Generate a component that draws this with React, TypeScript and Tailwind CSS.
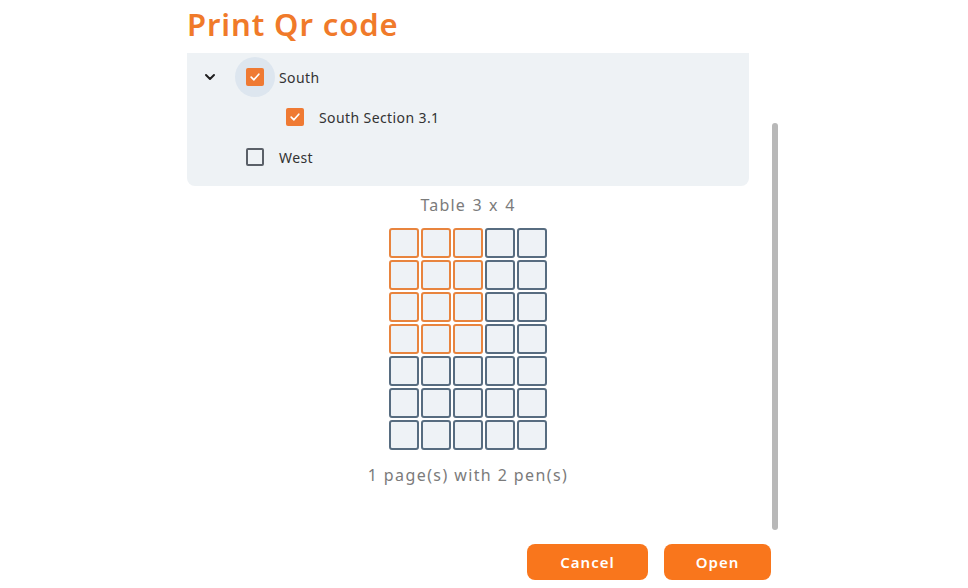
import React from "react";

function Check({ checked }: { checked: boolean }) {
  if (checked) {
    return (
      <div className="w-[18px] h-[18px] rounded-[2px] bg-[#ef7a33] flex items-center justify-center">
        <svg width="12" height="12" viewBox="0 0 12 12" fill="none">
          <path d="M2.2 6.2 L4.9 8.8 L9.8 3.2" stroke="white" strokeWidth="1.7" strokeLinecap="round" strokeLinejoin="round" />
        </svg>
      </div>
    );
  }
  return <div className="w-[18px] h-[18px] rounded-[2px] border-2 border-[#5a6068] bg-transparent" />;
}

function Chevron() {
  return (
    <svg width="16" height="16" viewBox="0 0 16 16" fill="none">
      <path d="M4 6 L8 10 L12 6" stroke="#1f1f1f" strokeWidth="2" strokeLinecap="round" strokeLinejoin="round" />
    </svg>
  );
}

export default function App() {
  const cols = 5;
  const rows = 7;
  const cells: { o: boolean; k: string }[] = [];
  for (let r = 0; r < rows; r++) {
    for (let c = 0; c < cols; c++) {
      cells.push({ o: r < 4 && c < 3, k: `${r}-${c}` });
    }
  }
  return (
    <div
      className="w-[968px] h-[588px] bg-white flex flex-col overflow-hidden"
      style={{ fontFamily: '"Noto Sans", "Open Sans", sans-serif' }}
    >
      <div className="h-[53px] pl-[187px] flex items-start">
        <h1 className="text-[31px] leading-[48px] font-semibold text-[#f07a2a] tracking-[0.9px]">Print Qr code</h1>
      </div>
      <div className="h-[477px] flex pl-[187px]">
        <div className="w-[562px] flex flex-col items-center">
          <div className="w-full bg-[#eef2f5] rounded-b-[8px] pt-[4px] pb-[9px]">
            <div className="h-[40px] flex items-center pl-[15px]">
              <div className="w-[16px] h-[16px] flex items-center justify-center">
                <Chevron />
              </div>
              <div className="ml-[17px] w-[40px] h-[40px] rounded-full bg-[#dde6ef] flex items-center justify-center">
                <Check checked />
              </div>
              <span className="ml-[4px] text-[14px] text-[#333] tracking-[0.4px]">South</span>
            </div>
            <div className="h-[40px] flex items-center pl-[88px]">
              <div className="w-[40px] h-[40px] flex items-center justify-center">
                <Check checked />
              </div>
              <span className="ml-[4px] text-[14px] text-[#333] tracking-[0.4px]">South Section 3.1</span>
            </div>
            <div className="h-[40px] flex items-center pl-[48px]">
              <div className="w-[40px] h-[40px] flex items-center justify-center">
                <Check checked={false} />
              </div>
              <span className="ml-[4px] text-[14px] text-[#333] tracking-[0.4px]">West</span>
            </div>
          </div>
          <div className="mt-[7px] text-[16px] leading-[24px] text-[#7b7b7b] tracking-[1.2px] [word-spacing:1px]">Table 3 x 4</div>
          <div className="mt-[11px] grid grid-cols-[repeat(5,30px)] grid-rows-[repeat(7,30px)] gap-[2px]">
            {cells.map((cell) => (
              <div
                key={cell.k}
                className={
                  cell.o
                    ? "rounded-[3px] border-2 border-[#e8843e] bg-[#eef2f6]"
                    : "rounded-[3px] border-2 border-[#576c80] bg-[#eef2f6]"
                }
              />
            ))}
          </div>
          <div className="mt-[13px] text-[16px] leading-[24px] text-[#7b7b7b] tracking-[1.4px]">1 page(s) with 2 pen(s)</div>
        </div>
        <div className="ml-[23px] w-[6px] flex flex-col">
          <div className="mt-[70px] h-[407px] w-[6px] rounded-full bg-[#b8b8b8]" />
        </div>
      </div>
      <div className="mt-[14px] flex justify-end pr-[197px] gap-[16px]">
        <button className="w-[121px] h-[36px] rounded-[8px] bg-[#f9761c] text-white text-[15px] leading-[34px] font-semibold tracking-[1px]">Cancel</button>
        <button className="w-[107px] h-[36px] rounded-[8px] bg-[#f9761c] text-white text-[15px] leading-[34px] font-semibold tracking-[1px]">Open</button>
      </div>
    </div>
  );
}
